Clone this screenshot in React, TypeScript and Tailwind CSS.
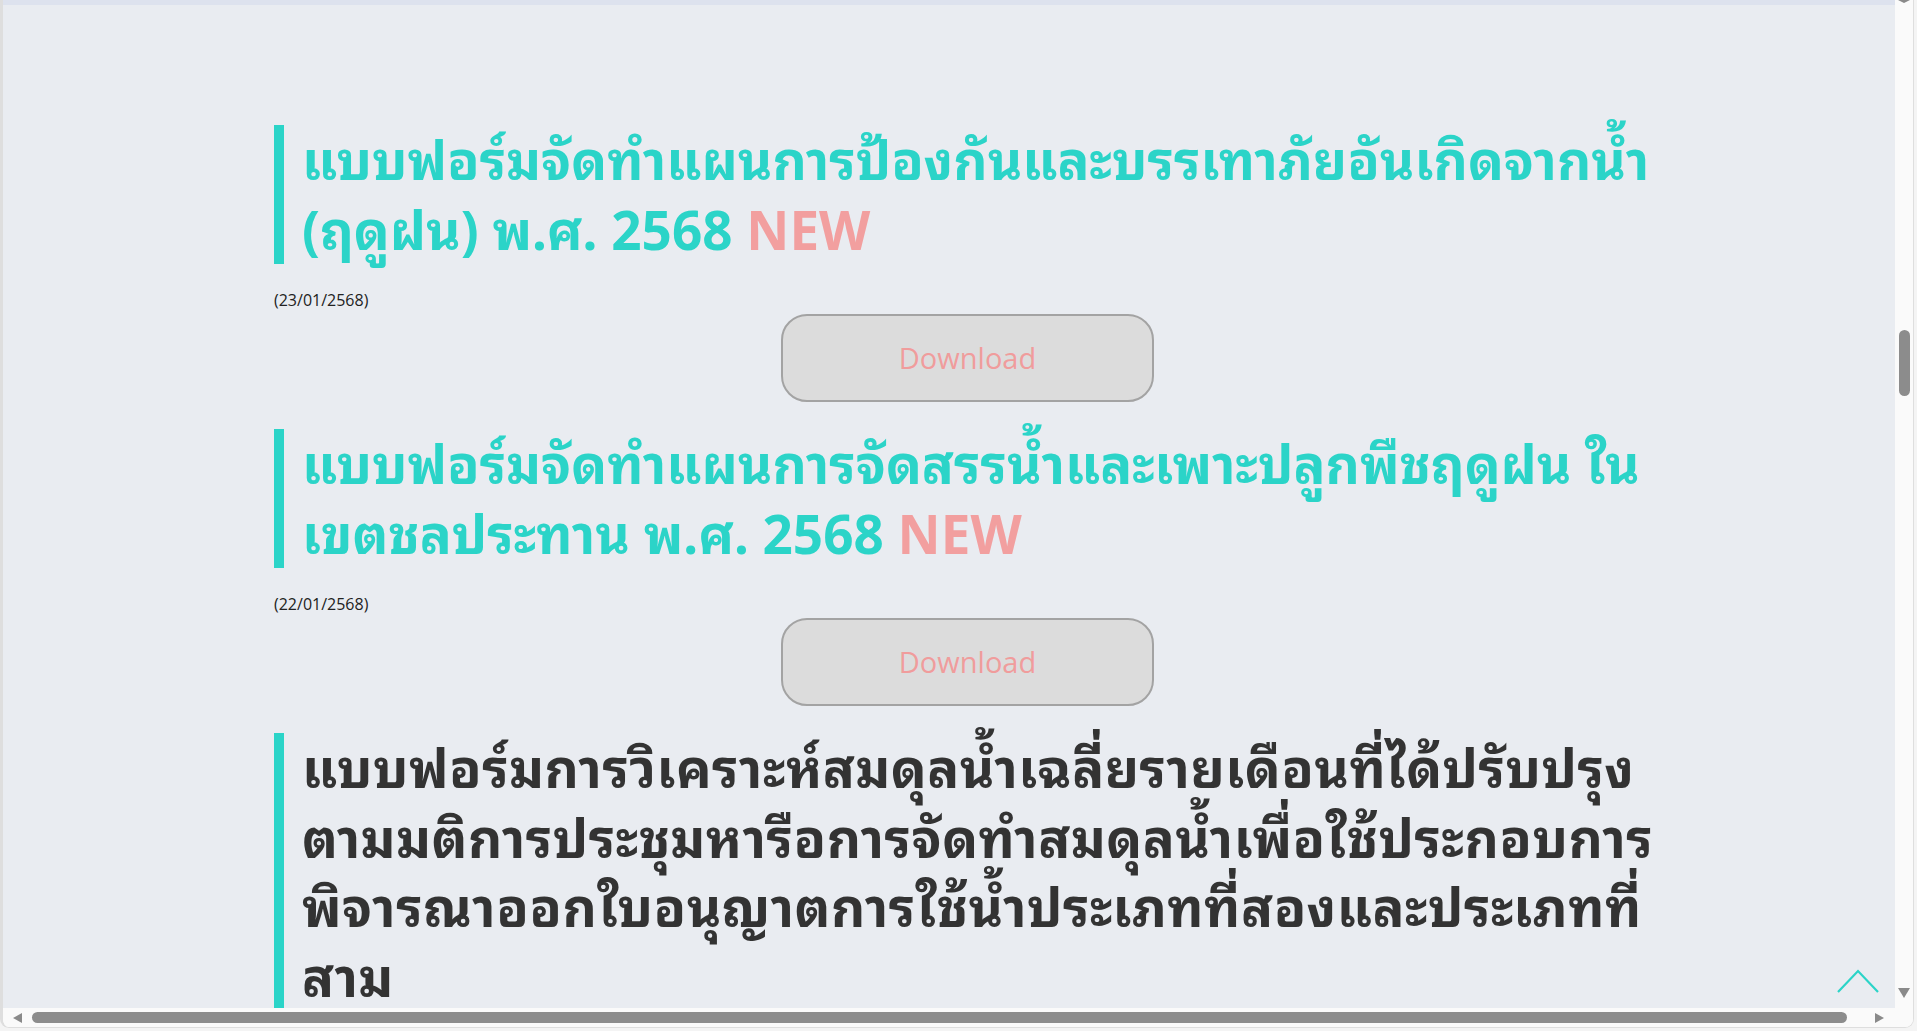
import React from "react"

type Doc = {
  lines: string[]
  date?: string
  isNew?: boolean
  dark?: boolean
}

const docs: Doc[] = [
  {
    lines: ["แบบฟอร์มจัดทำแผนการป้องกันและบรรเทาภัยอันเกิดจากน้ำ", "(ฤดูฝน) พ.ศ. 2568"],
    isNew: true,
    date: "(23/01/2568)",
  },
  {
    lines: ["แบบฟอร์มจัดทำแผนการจัดสรรน้ำและเพาะปลูกพืชฤดูฝน ใน", "เขตชลประทาน พ.ศ. 2568"],
    isNew: true,
    date: "(22/01/2568)",
  },
  {
    lines: [
      "แบบฟอร์มการวิเคราะห์สมดุลน้ำเฉลี่ยรายเดือนที่ได้ปรับปรุง",
      "ตามมติการประชุมหารือการจัดทำสมดุลน้ำเพื่อใช้ประกอบการ",
      "พิจารณาออกใบอนุญาตการใช้น้ำประเภทที่สองและประเภทที่",
      "สาม",
    ],
    dark: true,
    date: "(20/01/2568)",
  },
]

function DocItem({ doc, first }: { doc: Doc; first?: boolean }) {
  return (
    <section className={first ? "" : "mt-[27px]"}>
      <h2
        className={`border-l-[10px] border-[#2bd4c8] pl-[18px] text-[53px] leading-[69.5px] font-bold font-['Noto_Sans','Noto_Sans_Thai_Looped','Noto_Sans_Thai',sans-serif] ${
          doc.dark ? "text-[#333333] tracking-[0.5px]" : "text-[#2bd4c8]"
        }`}
      >
        {doc.lines.map((line, i) => (
          <span key={i} className="block whitespace-nowrap">
            {line}
            {doc.isNew && i === doc.lines.length - 1 && (
              <span className="text-[#f29f9f]"> NEW</span>
            )}
          </span>
        ))}
      </h2>
      <p className="mt-[25px] text-[16px] leading-[22px] text-[#222222] font-['Open_Sans',sans-serif]">
        {doc.date}
      </p>
      <button
        type="button"
        className="mx-auto mt-[3px] flex h-[88px] w-[373px] items-center justify-center rounded-[26px] border-2 border-[#a3a3a3] bg-[#dcdcdc] text-[29px] text-[#f09c9c] font-['Open_Sans',sans-serif]"
      >
        Download
      </button>
    </section>
  )
}

export default function App() {
  return (
    <div className="h-[1031px] w-[1917px] overflow-hidden bg-[#f4f4f4]">
      <div className="flex h-[1028px] w-[1914px] flex-col overflow-hidden rounded-b-[9px] border-b border-l-[3px] border-r border-[#dedede] bg-[#fafafa]">
        <div className="flex min-h-0 flex-1">
          <main className="relative min-w-0 flex-1 overflow-hidden bg-[#e9ecf1]">
            <div className="h-[5px] bg-[#dde2ee]" />
            <div className="ml-[271px] w-[1387px] pt-[120px]">
              {docs.map((d, i) => (
                <DocItem key={i} doc={d} first={i === 0} />
              ))}
            </div>
            <a
              href="#top"
              className="absolute bottom-[15px] right-[16px] block h-[24px] w-[42px]"
              aria-label="top"
            >
              <svg viewBox="0 0 42 24" className="h-full w-full" fill="none">
                <path d="M1 23 L21 2 L41 23" stroke="#2bd4c8" strokeWidth="2.2" />
              </svg>
            </a>
          </main>
          {/* vertical scrollbar */}
          <div className="flex w-[18px] flex-col items-center bg-[#fafafa]">
            <div className="h-0 w-0 border-x-[6px] border-t-[3px] border-x-transparent border-t-[#8a8a8a]" />
            <div className="mt-[327px] h-[66px] w-[11px] rounded-full bg-[#8c8c8c]" />
            <div className="flex-1" />
            <div className="mb-[10px] h-0 w-0 border-x-[6.5px] border-t-[10px] border-x-transparent border-t-[#8a8a8a]" />
          </div>
        </div>
        {/* horizontal scrollbar */}
        <div className="flex h-[19px] items-center bg-[#fafafa]">
          <div className="ml-[10px] h-0 w-0 border-y-[5px] border-r-[9px] border-y-transparent border-r-[#8a8a8a]" />
          <div className="ml-[10px] h-[11px] w-[1815px] rounded-full bg-[#8c8c8c]" />
          <div className="ml-[28px] h-0 w-0 border-y-[5px] border-l-[9px] border-y-transparent border-l-[#8a8a8a]" />
        </div>
      </div>
    </div>
  )
}
